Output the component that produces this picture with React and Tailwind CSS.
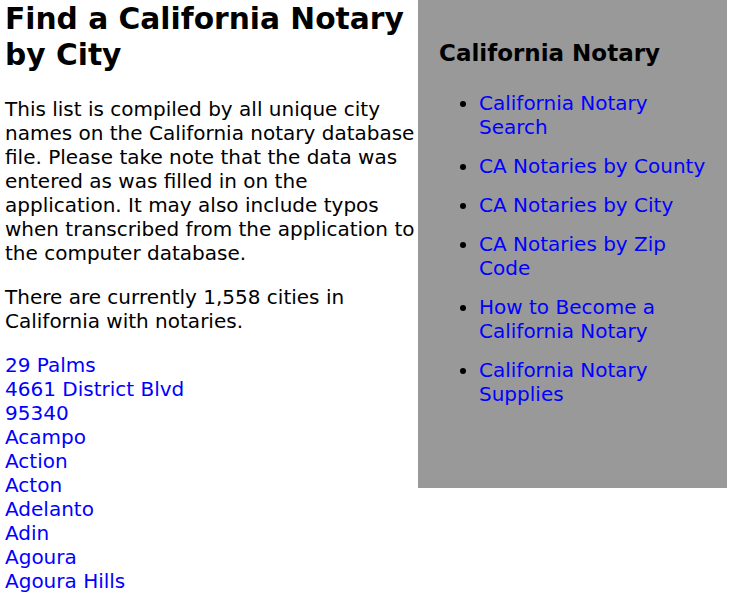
const CITIES = [
  '29 Palms',
  '4661 District Blvd',
  '95340',
  'Acampo',
  'Action',
  'Acton',
  'Adelanto',
  'Adin',
  'Agoura',
  'Agoura Hills',
]

const LINKS = [
  'California Notary Search',
  'CA Notaries by County',
  'CA Notaries by City',
  'CA Notaries by Zip Code',
  'How to Become a California Notary',
  'California Notary Supplies',
]

export default function App() {
  return (
    <div className="flex items-start bg-white text-black h-[594px] overflow-hidden" style={{ fontFamily: '"DejaVu Sans", Verdana, sans-serif' }}>
      {/* Main column */}
      <div className="w-[418px] shrink-0 pl-[5px] text-[20px] leading-[24px]">
        <h1 className="text-[29.7px] leading-[36px] font-bold mt-[1px]">
          Find a California Notary by City
        </h1>
        <p className="mt-6">
          This list is compiled by all unique city names on the California notary database file.
          Please take note that the data was entered as was filled in on the application. It may
          also include typos when transcribed from the application to the computer database.
        </p>
        <p className="mt-5">There are currently 1,558 cities in California with notaries.</p>
        <div className="mt-5">
          {CITIES.map((c) => (
            <a key={c} href="#" className="block text-[#0000ff]">
              {c}
            </a>
          ))}
        </div>
      </div>

      {/* Sidebar */}
      <div className="w-[309px] h-[488px] shrink-0 bg-[#999999] pl-[21px] pr-[20px] pt-[38px] text-[20px] leading-[24px]">
        <h2 className="text-[23px] leading-[30px] font-bold">California Notary</h2>
        <ul className="list-disc pl-10 mt-[23px] space-y-[15px]">
          {LINKS.map((l) => (
            <li key={l}>
              <a href="#" className="text-[#0000ff]">
                {l}
              </a>
            </li>
          ))}
        </ul>
      </div>
    </div>
  )
}
